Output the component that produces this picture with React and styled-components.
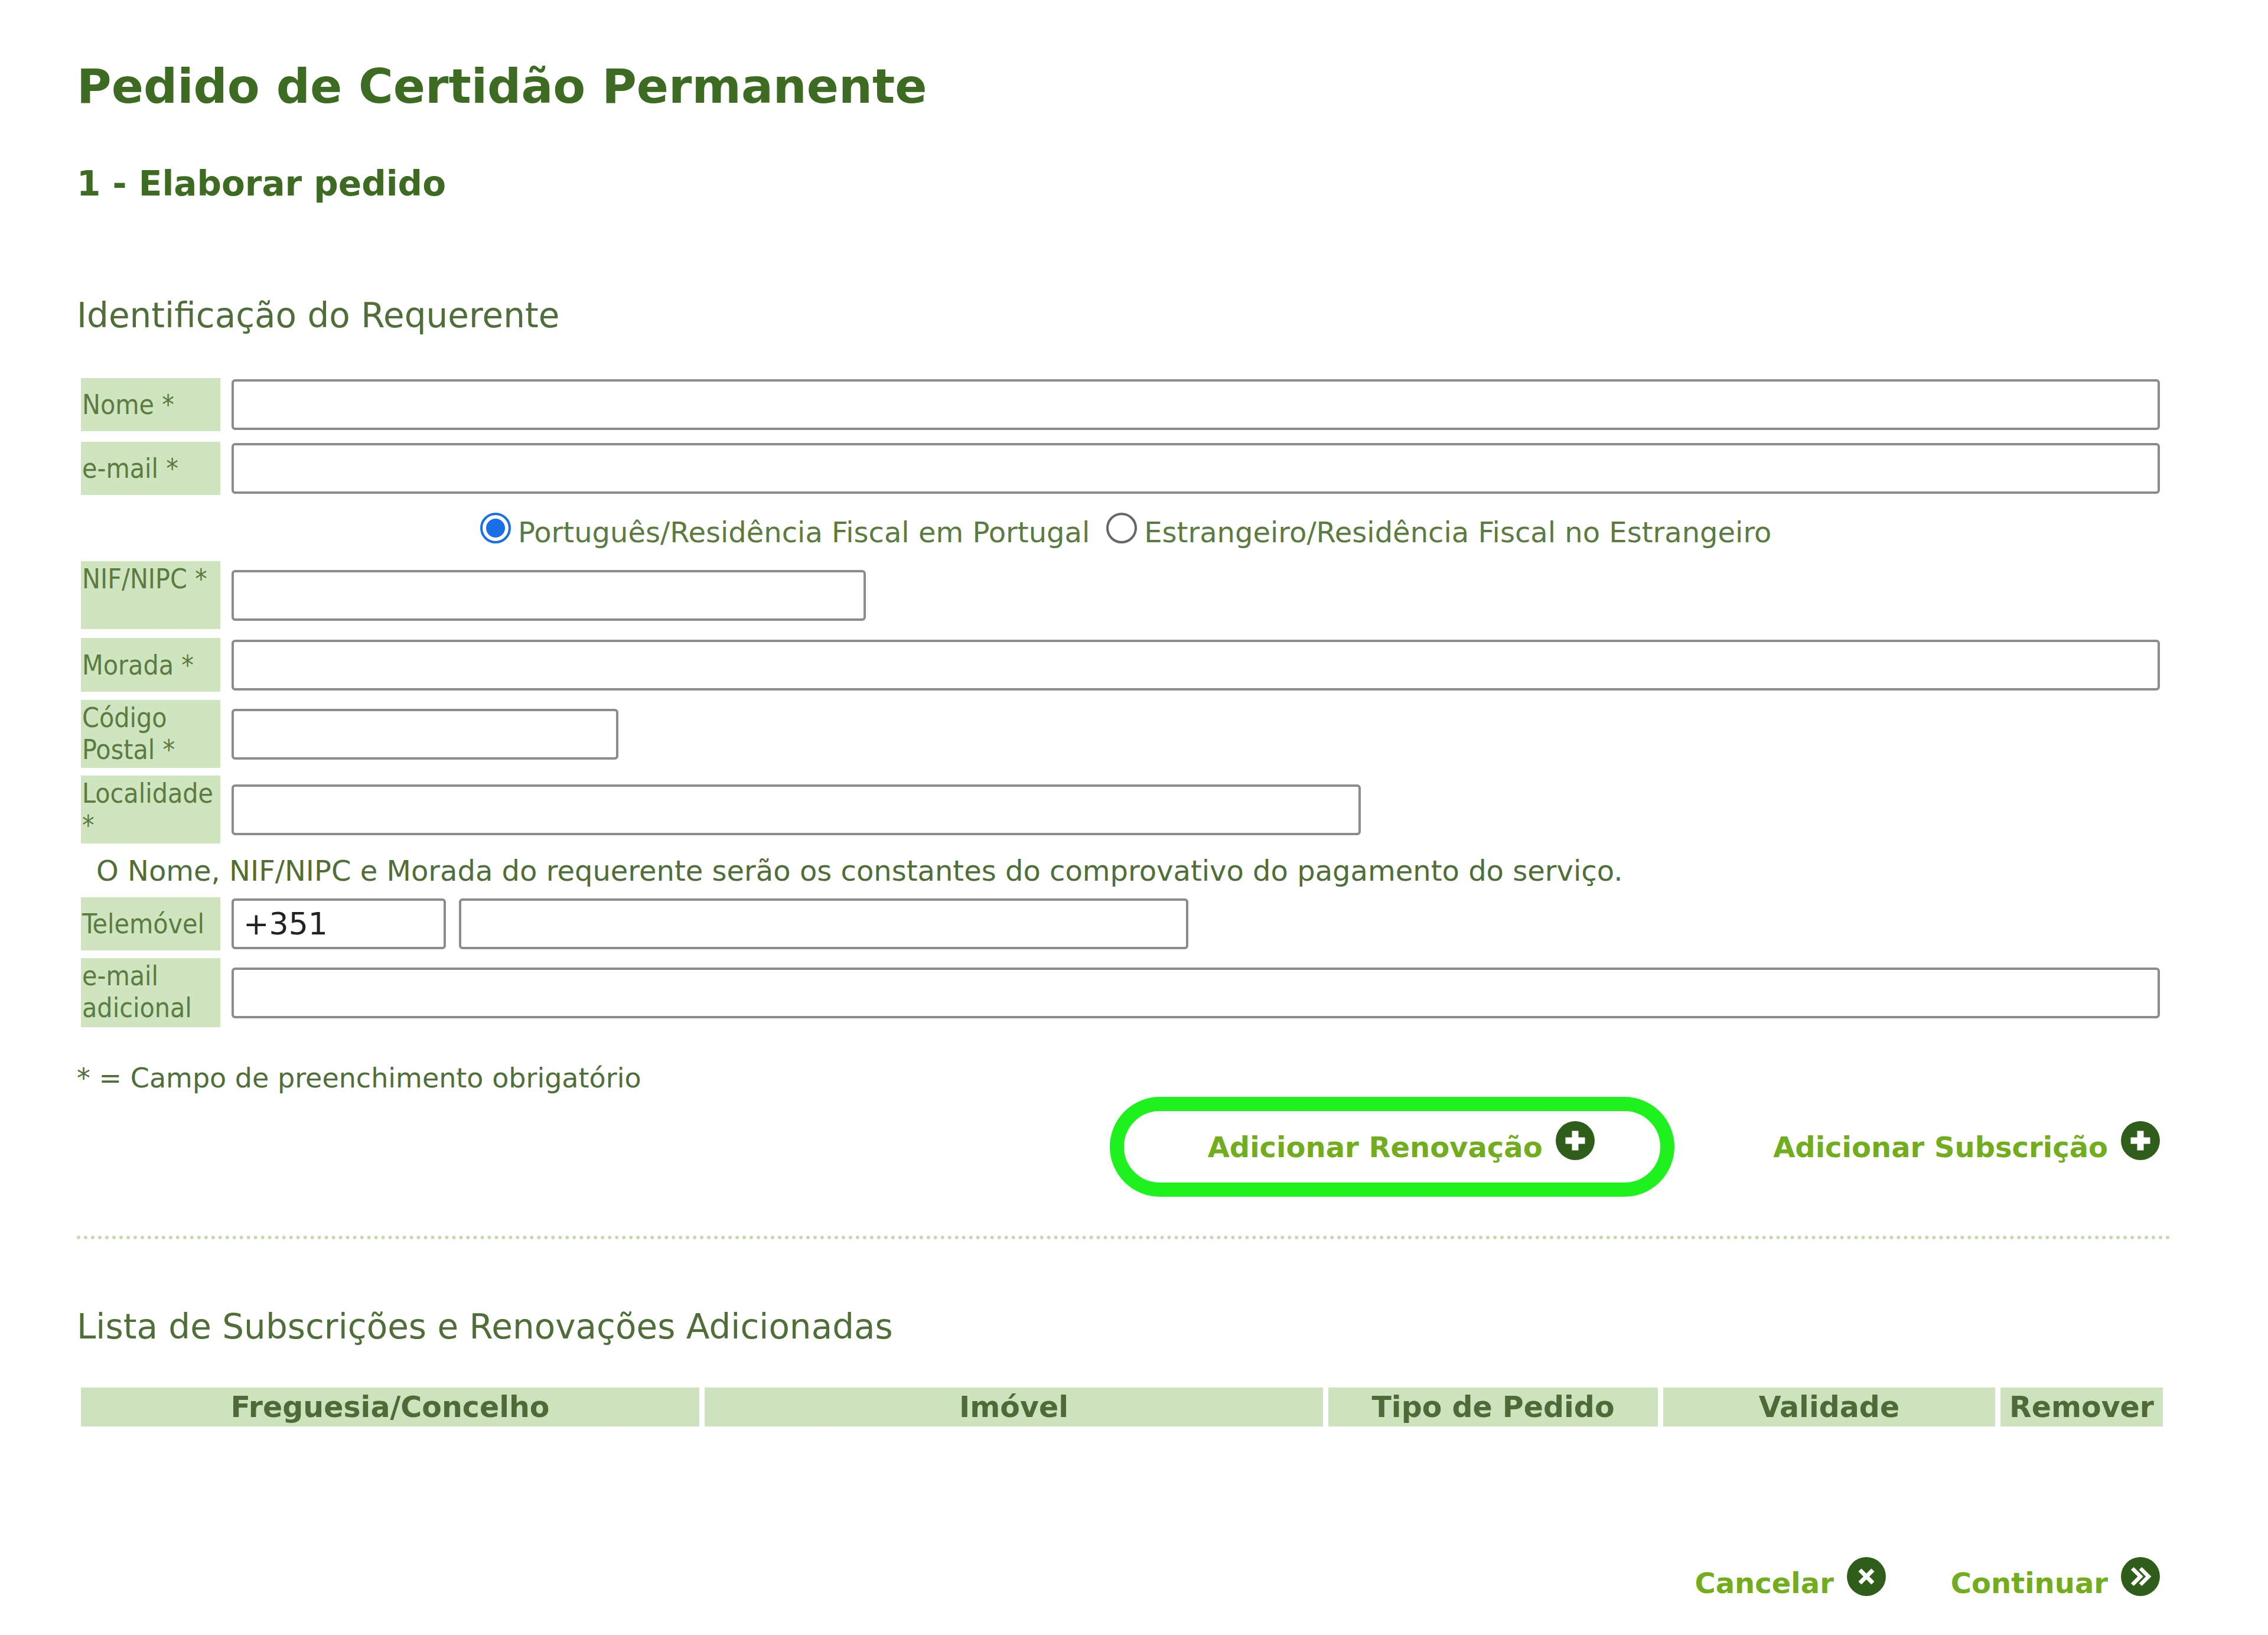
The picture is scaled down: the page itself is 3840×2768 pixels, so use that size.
import React from 'react';
import styled, { createGlobalStyle } from 'styled-components';

const Global = createGlobalStyle`
  body { margin: 0; background: #fff; font-family: 'DejaVu Sans', Verdana, sans-serif; }
`;

const Page = styled.div`
  width: 3840px;
  height: 2768px;
  padding: 94px 0 0 130px;
  box-sizing: border-box;
`;

const Title = styled.h1`
  margin: 0;
  font-size: 80px;
  line-height: 106px;
  font-weight: bold;
  color: #3d6b22;
`;

const Step = styled.h2`
  margin: 81px 0 0;
  font-size: 58px;
  line-height: 60px;
  font-weight: bold;
  color: #3d6b22;
`;

const Section = styled.h3`
  margin: ${({ top }) => top}px 0 0;
  font-size: 58px;
  line-height: 60px;
  font-weight: normal;
  color: #4f6e38;
`;

const Form = styled.div`
  margin: 76px 0 0 7px;
  display: flex;
  flex-direction: column;
`;

const Row = styled.div`
  display: flex;
  align-items: center;
  gap: ${({ gap }) => gap ?? 19}px;
  margin-bottom: ${({ mb }) => mb ?? 14}px;
`;

const Label = styled.div`
  width: 236px;
  height: ${({ h }) => h || 90}px;
  flex-shrink: 0;
  background: #cfe5bf;
  color: #5b7b40;
  font-family: 'DejaVu Sans Condensed', 'DejaVu Sans', sans-serif;
  font-size: 46px;
  line-height: 54px;
  padding: 3px 2px;
  box-sizing: border-box;
  display: flex;
  align-items: ${({ top }) => (top ? 'flex-start' : 'center')};
  overflow: hidden;
  white-space: ${({ top }) => (top ? 'normal' : 'nowrap')};
`;

const Input = styled.div`
  width: ${({ w }) => w}px;
  height: 86px;
  box-sizing: border-box;
  border: 4px solid #8c8c8c;
  border-radius: 6px;
  background: #fff;
  font-size: 52px;
  padding-left: 16px;
  display: flex;
  align-items: center;
  color: #222;
  align-self: ${({ top }) => (top ? 'flex-start' : 'center')};
  margin-top: ${({ top }) => (top ? 8 : 0)}px;
`;

const RadioRow = styled.div`
  display: flex;
  align-items: center;
  padding-left: 676px;
  height: 70px;
  margin: 28px 0 14px;
  font-size: 48px;
  color: #5b7b40;
`;

const Radio = styled.span`
  width: 52px;
  height: 52px;
  border-radius: 50%;
  box-sizing: border-box;
  border: ${({ on }) => (on ? '4px solid #1a6ee8' : '4px solid #666')};
  background: #fff;
  display: inline-flex;
  align-items: center;
  justify-content: center;
  margin: 0 12px 14px 0;
  &::after {
    content: '';
    display: ${({ on }) => (on ? 'block' : 'none')};
    width: 32px;
    height: 32px;
    border-radius: 50%;
    background: #1a6ee8;
  }
`;

const Opt = styled.span`
  margin-right: 28px;
`;

const Note = styled.div`
  font-size: 48px;
  color: #4f6e38;
  margin: 16px 0 15px 26px;
  line-height: 60px;
  white-space: nowrap;
`;

const Required = styled.div`
  margin-top: 56px;
  font-size: 46px;
  line-height: 60px;
  color: #4f6e38;
`;

const Actions = styled.div`
  display: flex;
  justify-content: flex-end;
  align-items: center;
  width: 3527px;
  gap: ${({ gap }) => gap}px;
  margin-top: ${({ top }) => top}px;
`;

const Oval = styled.div`
  width: 956px;
  height: 169px;
  box-sizing: border-box;
  border: 24px solid #1ef21e;
  border-radius: 90px;
  display: flex;
  align-items: center;
  justify-content: center;
  padding-left: 30px;
`;

const LinkBtn = styled.span`
  display: inline-flex;
  align-items: center;
  gap: 22px;
  font-size: 48px;
  font-weight: bold;
  color: #72ad1e;
  svg { margin-top: -22px; }
`;

const Dotted = styled.div`
  width: 3546px;
  border-top: 6px dotted #c5d9b5;
  margin-top: 66px;
`;

const Table = styled.div`
  margin: 73px 0 0 7px;
  display: grid;
  grid-template-columns: 1047px 1047px 558px 562px 275px;
  gap: 9px;
`;

const Th = styled.div`
  background: #cde3bd;
  height: 66px;
  display: flex;
  align-items: center;
  justify-content: center;
  font-size: 49px;
  font-weight: bold;
  color: #4f6a36;
`;

const Icon = ({ kind }) => (
  <svg width="66" height="66" viewBox="0 0 24 24">
    <circle cx="12" cy="12" r="12" fill="#2f5e1a" />
    {kind === 'plus' && <path d="M12 6v12M6 12h12" stroke="#fff" strokeWidth="4" />}
    {kind === 'x' && <path d="M8 8l8 8M16 8l-8 8" stroke="#fff" strokeWidth="2.6" />}
    {kind === 'next' && <path d="M7 7l5 5-5 5M12 7l5 5-5 5" stroke="#fff" strokeWidth="2.4" fill="none" />}
  </svg>
);

export default function App() {
  return (
    <Page>
      <Global />
      <Title>Pedido de Certidão Permanente</Title>
      <Step>1 - Elaborar pedido</Step>
      <Section top={163}>Identificação do Requerente</Section>
      <Form>
        <Row mb={18}><Label>Nome *</Label><Input w={3265} /></Row>
        <Row mb={0}><Label>e-mail *</Label><Input w={3265} /></Row>
        <RadioRow>
          <Radio on /><Opt>Português/Residência Fiscal em Portugal</Opt>
          <Radio /><span>Estrangeiro/Residência Fiscal no Estrangeiro</span>
        </RadioRow>
        <Row mb={15}><Label h={115} top>NIF/NIPC *</Label><Input w={1074} /></Row>
        <Row><Label h={91}>Morada *</Label><Input w={3265} /></Row>
        <Row mb={13}><Label h={115} top>Código Postal *</Label><Input w={655} /></Row>
        <Row mb={0}><Label h={115} top>Localidade *</Label><Input w={1912} /></Row>
        <Note>O Nome, NIF/NIPC e Morada do requerente serão os constantes do comprovativo do pagamento do serviço.</Note>
        <Row mb={13} gap={19}>
          <Label>Telemóvel</Label>
          <Input w={363}>+351</Input>
          <Input w={1235} style={{ marginLeft: 3 }} />
        </Row>
        <Row mb={0}><Label h={117} top>e-mail adicional</Label><Input w={3265} /></Row>
      </Form>
      <Required>* = Campo de preenchimento obrigatório</Required>
      <Actions gap={167} top={2}>
        <Oval><LinkBtn>Adicionar Renovação <Icon kind="plus" /></LinkBtn></Oval>
        <LinkBtn>Adicionar Subscrição <Icon kind="plus" /></LinkBtn>
      </Actions>
      <Dotted />
      <Section top={118}>Lista de Subscrições e Renovações Adicionadas</Section>
      <Table>
        <Th>Freguesia/Concelho</Th>
        <Th>Imóvel</Th>
        <Th>Tipo de Pedido</Th>
        <Th>Validade</Th>
        <Th>Remover</Th>
      </Table>
      <Actions gap={110} top={237}>
        <LinkBtn>Cancelar <Icon kind="x" /></LinkBtn>
        <LinkBtn>Continuar <Icon kind="next" /></LinkBtn>
      </Actions>
    </Page>
  );
}
